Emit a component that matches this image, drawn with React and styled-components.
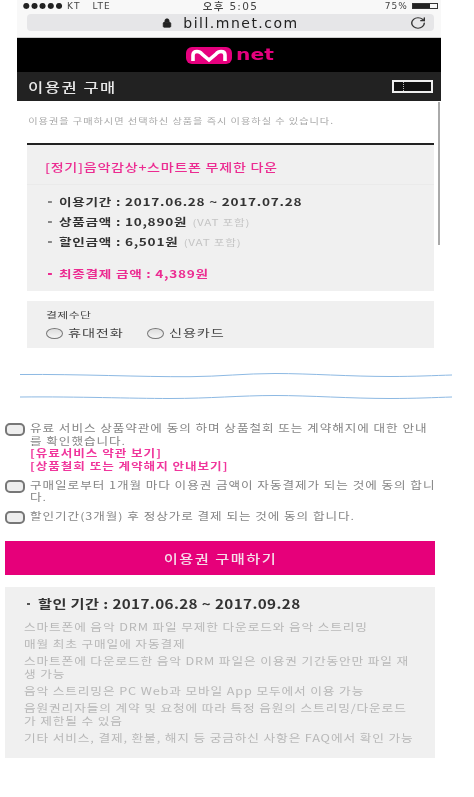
import styled, { createGlobalStyle, css } from "styled-components";
import { Lock, RotateCw } from "lucide-react";

const Global = createGlobalStyle`
  html, body { margin: 0; padding: 0; background: #fff; }
  body { font-family: "Noto Sans CJK KR", "Noto Sans", sans-serif; }
  p, h1, h2, ul { margin: 0; padding: 0; }
`;

/* the source capture is stretched sideways, so text is too */
const wide = (k, w) => css`
  display: block;
  width: ${w / k}px;
  transform: scaleX(${k});
  transform-origin: left center;
`;

/* ── phone chrome ── */
function Chrome() {
  return (
    <>
      <StatusBar>
        <Carrier>
          <Dots>●●●●●</Dots> <Kt>KT</Kt> <Lte>LTE</Lte>
        </Carrier>
        <Clock>오후 5:05</Clock>
        <BatteryWrap>
          75%
          <Battery><BatteryFill /></Battery>
        </BatteryWrap>
      </StatusBar>
      <UrlWrap>
        <UrlBar>
          <UrlText>
            <Lock size={10} fill="#222" strokeWidth={2} />
            bill.mnet.com
          </UrlText>
          <Reload><RotateCw size={14} strokeWidth={2} /></Reload>
        </UrlBar>
      </UrlWrap>
    </>
  );
}

/* ── logo ── */
function Logo() {
  return (
    <LogoWrap>
      <svg width="46" height="17" viewBox="0 0 46 17">
        <rect width="46" height="17" rx="6" fill="#e6007e" />
        <path d="M7 14 V8 Q7 4.5 11 4.5 Q14 4.5 16 7 L23 13 L30 7 Q32 4.5 35 4.5 Q39 4.5 39 8 V14" fill="none" stroke="#fff" strokeWidth="3.6" />
      </svg>
      <LogoNet>net</LogoNet>
    </LogoWrap>
  );
}

/* ── torn page edge ── */
function Tear() {
  return (
    <TearWrap>
      <svg width="432" height="28" viewBox="0 0 432 28">
        <path d="M0 1.5 C60 1 120 4 170 3.7 C200 3.5 225 .5 255 .5 C290 .5 330 3.5 370 3.5 C395 3.5 415 2.5 432 2" fill="none" stroke="#8db9e3" strokeWidth="1" />
        <path d="M0 24 C60 23.5 110 25.5 150 25.5 C190 25.5 220 22.5 255 22.5 C290 22.5 330 25.5 370 25.5 C395 25.5 415 24.5 432 24" fill="none" stroke="#8db9e3" strokeWidth="1" />
      </svg>
    </TearWrap>
  );
}

const notes = [
  "스마트폰에 음악 DRM 파일 무제한 다운로드와 음악 스트리밍",
  "매월 최초 구매일에 자동결제",
  "스마트폰에 다운로드한 음악 DRM 파일은 이용권 기간동안만 파일 재생 가능",
  "음악 스트리밍은 PC Web과 모바일 App 모두에서 이용 가능",
  "음원권리자들의 계약 및 요청에 따라 특정 음원의 스트리밍/다운로드가 제한될 수 있음",
  "기타 서비스, 결제, 환불, 해지 등 궁금하신 사항은 FAQ에서 확인 가능",
];

export default function App() {
  return (
    <Page>
      <Global />
      <Phone>
        <Chrome />
        <BlackBar><Logo /></BlackBar>
        <TitleBar>
          <Title>이용권 구매</Title>
          <MenuBox><MenuTick /></MenuBox>
        </TitleBar>
        <Content>
          <Intro>이용권을 구매하시면 선택하신 상품을 즉시 이용하실 수 있습니다.</Intro>
          <Summary>
            <ProductRow><ProductName>[정기]음악감상+스마트폰 무제한 다운</ProductName></ProductRow>
            <SummaryBody>
              <Item><b>이용기간 : 2017.06.28 ~ 2017.07.28</b></Item>
              <Item><b>상품금액 : 10,890원</b> <Vat>(VAT 포함)</Vat></Item>
              <Item><b>할인금액 : 6,501원</b> <Vat>(VAT 포함)</Vat></Item>
              <Item $total><b>최종결제 금액 : 4,389원</b></Item>
            </SummaryBody>
          </Summary>
          <PayBox>
            <PayLabel>결제수단</PayLabel>
            <RadioRow>
              <RadioLabel><Radio /><RadioText>휴대전화</RadioText></RadioLabel>
              <RadioLabel><Radio /><RadioText>신용카드</RadioText></RadioLabel>
            </RadioRow>
          </PayBox>
        </Content>
      </Phone>
      <Tear />
      <Lower>
        <Agree>
          <Check />
          <AgreeText>
            유료 서비스 상품약관에 동의 하며 상품철회 또는 계약해지에 대한 안내를 확인했습니다.
            <AgreeLink>[유료서비스 약관 보기]</AgreeLink>
            <AgreeLink>[상품철회 또는 계약해지 안내보기]</AgreeLink>
          </AgreeText>
        </Agree>
        <Agree>
          <Check />
          <AgreeText>구매일로부터 1개월 마다 이용권 금액이 자동결제가 되는 것에 동의 합니다.</AgreeText>
        </Agree>
        <Agree>
          <Check />
          <AgreeText>할인기간(3개월) 후 정상가로 결제 되는 것에 동의 합니다.</AgreeText>
        </Agree>
        <BuyButton><BuyLabel>이용권 구매하기</BuyLabel></BuyButton>
        <InfoBox>
          <InfoTitle><InfoTitleText>할인 기간 : 2017.06.28 ~ 2017.09.28</InfoTitleText></InfoTitle>
          <NoteList>
            {notes.map((n) => <Note key={n}>{n}</Note>)}
          </NoteList>
        </InfoBox>
      </Lower>
      <ScrollThumb />
    </Page>
  );
}

/* ── styled ── */
const Page = styled.div`
  position: relative;
  width: 474px;
  height: 797px;
  overflow: hidden;
  background: #fff;
  filter: blur(0.5px);
`;

const Phone = styled.div`
  width: 424px;
  margin-left: 17px;
`;

const StatusBar = styled.div`
  display: flex;
  justify-content: space-between;
  align-items: center;
  height: 11px;
  padding: 0 3px 0 6px;
  background: #f8f8f8;
  font-family: "DejaVu Sans", "Noto Sans CJK KR", sans-serif;
  font-size: 9px;
  letter-spacing: 1.1px;
  color: #444;
`;

const Carrier = styled.span`
  display: flex;
  align-items: center;
  gap: 3px;
  width: 125px;
`;

const Dots = styled.span`
  font-size: 8px;
  letter-spacing: 1.2px;
  color: #222;
`;

const Kt = styled.span`
  letter-spacing: 2px;
`;

const Lte = styled.span`
  margin-left: 8px;
`;

const Clock = styled.span`
  font-size: 10.5px;
  letter-spacing: 1.3px;
  font-weight: 500;
`;

const BatteryWrap = styled.span`
  display: flex;
  align-items: center;
  justify-content: flex-end;
  gap: 4px;
  width: 125px;
`;

const Battery = styled.span`
  display: block;
  width: 26px;
  height: 6px;
  border: 1px solid #333;
  box-sizing: border-box;
`;

const BatteryFill = styled.span`
  display: block;
  width: 72%;
  height: 100%;
  background: #222;
`;

const UrlWrap = styled.div`
  height: 27px;
  padding: 3px 7px 0 10px;
  box-sizing: border-box;
  background: #f8f8f8;
  border-bottom: 1px solid #ccc;
`;

const UrlBar = styled.div`
  position: relative;
  display: flex;
  align-items: center;
  justify-content: center;
  height: 17px;
  border-radius: 4px;
  background: #e6e6e8;
`;

const UrlText = styled.span`
  display: flex;
  align-items: center;
  gap: 11px;
  font-family: "DejaVu Sans", sans-serif;
  font-size: 14px;
  letter-spacing: 1.5px;
  color: #222;
`;

const Reload = styled.span`
  position: absolute;
  right: 9px;
  top: 2px;
  display: flex;
  color: #333;
  transform: scaleX(1.2);
`;

const BlackBar = styled.div`
  display: flex;
  align-items: center;
  justify-content: center;
  height: 34px;
  padding-left: 3px;
  background: #000;
`;

const LogoWrap = styled.div`
  display: flex;
  align-items: center;
  gap: 4px;
  width: 89px;
`;

const LogoNet = styled.span`
  font-family: "DejaVu Sans", sans-serif;
  font-size: 15px;
  font-weight: 700;
  line-height: 1;
  color: #e6007e;
  transform: scaleX(1.35);
  transform-origin: left center;
`;

const TitleBar = styled.div`
  display: flex;
  align-items: center;
  justify-content: space-between;
  height: 29px;
  padding: 0 8px 0 11px;
  background: #222;
`;

const Title = styled.h1`
  ${wide(1.27, 100)}
  font-size: 13px;
  font-weight: 500;
  letter-spacing: 1.2px;
  color: #e8e8e8;
`;

const MenuBox = styled.div`
  position: relative;
  width: 37px;
  height: 9px;
  border: 2px solid #eee;
  background: #111;
`;

const MenuTick = styled.span`
  position: absolute;
  left: 9px;
  top: 0;
  bottom: 0;
  border-left: 1px dotted #bbb;
`;

const Content = styled.div`
  padding: 0 7px 0 10px;
`;

const Intro = styled.p`
  ${wide(1.2, 400)}
  padding: 13px 0 17px 1px;
  font-size: 8.5px;
  line-height: 12px;
  letter-spacing: 0.8px;
  color: #a8a8a8;
`;

const Summary = styled.section`
  border-top: 2px solid #222;
  background: #f0f0f0;
`;

const ProductRow = styled.div`
  height: 40px;
  padding: 13px 0 0 18px;
  box-sizing: border-box;
  border-bottom: 1px solid #eaeaea;
`;

const ProductName = styled.h2`
  ${wide(1.28, 380)}
  font-size: 11px;
  font-weight: 500;
  line-height: 18px;
  letter-spacing: 0.55px;
  color: #ec2b91;
`;

const SummaryBody = styled.ul`
  padding: 7px 0 7px 21px;
  list-style: none;
`;

const Item = styled.li`
  display: flex;
  align-items: baseline;
  gap: 4px;
  height: 20px;
  width: 280px;
  margin-top: ${(p) => (p.$total ? "12px" : "0")};
  font-size: 10.5px;
  line-height: 20px;
  letter-spacing: 0.55px;
  color: ${(p) => (p.$total ? "#ec2b91" : "#333")};
  transform: scaleX(1.3);
  transform-origin: left center;

  &::before {
    content: "";
    align-self: center;
    width: 3px;
    height: 2px;
    margin-right: 1.5px;
    background: ${(p) => (p.$total ? "#ec2b91" : "#888")};
  }

  b {
    font-weight: 700;
  }
`;

const Vat = styled.span`
  font-size: 9px;
  color: #c4c4c4;
`;

const PayBox = styled.section`
  height: 47px;
  margin-top: 10px;
  padding: 8px 0 0 19px;
  box-sizing: border-box;
  background: #f0f0f0;
`;

const PayLabel = styled.p`
  ${wide(1.4, 100)}
  font-size: 8.5px;
  line-height: 10px;
  letter-spacing: 0.3px;
  color: #444;
`;

const RadioRow = styled.div`
  display: flex;
  margin-top: 7px;
`;

const RadioLabel = styled.label`
  display: flex;
  align-items: center;
  gap: 5px;
  width: 101px;
`;

const RadioText = styled.span`
  ${wide(1.42, 70)}
  font-size: 10px;
  line-height: 14px;
  letter-spacing: 0.6px;
  color: #444;
`;

const Radio = styled.span`
  flex: none;
  width: 15px;
  height: 9px;
  border: 1px solid #777;
  border-radius: 50%;
  background: linear-gradient(#ddd, #f5f5f5);
`;

const TearWrap = styled.div`
  margin: 25px 0 0 20px;
  height: 28px;

  svg {
    display: block;
  }
`;

const Lower = styled.div`
  width: 430px;
  margin: 21px 0 0 5px;
`;

const Agree = styled.div`
  display: flex;
  gap: 5px;
  margin-bottom: 6.5px;
`;

const Check = styled.span`
  flex: none;
  width: 16px;
  height: 9px;
  margin-top: 1px;
  border: 2px solid #777;
  border-radius: 5px;
  background: #eee;
`;

const AgreeText = styled.div`
  ${wide(1.26, 409)}
  flex: none;
  word-break: break-all;
  font-size: 10px;
  line-height: 12.5px;
  letter-spacing: 0.75px;
  color: #858585;
`;

const AgreeLink = styled.span`
  display: block;
  font-weight: 700;
  color: #f0369c;
`;

const BuyButton = styled.button`
  display: flex;
  align-items: center;
  justify-content: center;
  width: 430px;
  height: 34px;
  margin: 17px 0 12px;
  padding: 0;
  border: 0;
  background: #e6007a;
`;

const BuyLabel = styled.span`
  font-family: "Noto Sans CJK KR", sans-serif;
  font-size: 12.5px;
  font-weight: 500;
  letter-spacing: 1.2px;
  color: #f6dce9;
  transform: scaleX(1.22);
`;

const InfoBox = styled.section`
  height: 171px;
  padding: 8px 0 0 19px;
  box-sizing: border-box;
  background: #f0f0f0;
`;

const InfoTitle = styled.h2`
  display: flex;
  align-items: center;
  gap: 8px;
  margin-left: 3px;
  line-height: 18px;

  &::before {
    content: "";
    flex: none;
    width: 3px;
    height: 2px;
    background: #555;
  }
`;

const InfoTitleText = styled.span`
  ${wide(1.22, 380)}
  font-size: 12.5px;
  font-weight: 700;
  letter-spacing: 0.3px;
  color: #333;
`;

const NoteList = styled.ul`
  margin-top: 7.75px;
  list-style: none;
`;

const Note = styled.li`
  ${wide(1.21, 390)}
  margin-bottom: 4.75px;
  word-break: break-all;
  font-size: 10.5px;
  line-height: 12.5px;
  letter-spacing: 0.7px;
  color: #b8b8b8;
`;

const ScrollThumb = styled.div`
  position: absolute;
  left: 438px;
  top: 102px;
  width: 2px;
  height: 143px;
  background: #aaa;
`;
